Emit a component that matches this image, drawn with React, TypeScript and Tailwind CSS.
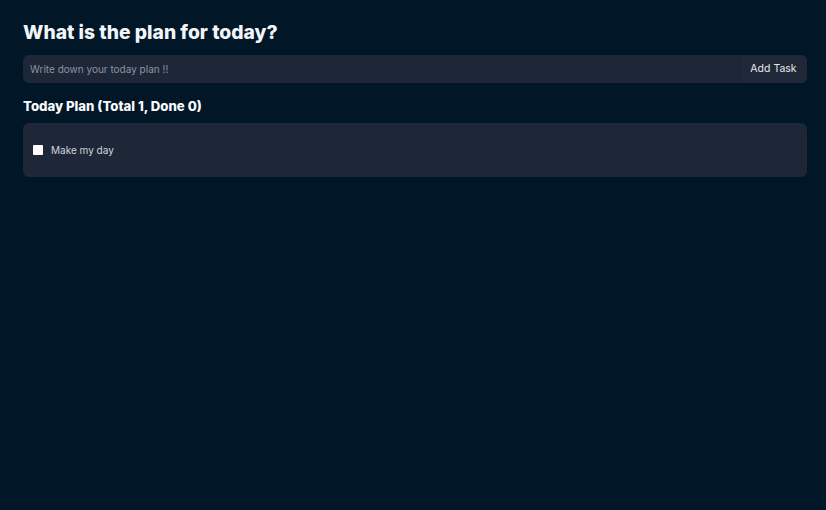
import { useState } from 'react';

export default function App() {
  const [tasks, setTasks] = useState([{ id: 1, title: 'Make my day', done: false }]);
  const doneCount = tasks.filter((t) => t.done).length;

  return (
    <div className="min-h-[510px] w-full bg-[#011627] font-['Inter',sans-serif] text-white">
      <div className="flex w-[807px] flex-col pl-[23px] pt-[18px]">
        <h1 className="text-[19.3px] leading-[28px] font-extrabold text-[#f1f5f9]">What is the plan for today?</h1>

        <div className="mt-[9px] flex h-[28px] overflow-hidden rounded-md bg-[#1e2738]">
          <input
            type="text"
            placeholder="Write down your today plan !!"
            className="flex-1 bg-transparent px-[7px] text-[10px] text-gray-300 placeholder-[#8b93a1] outline-none"
          />
          <button className="w-[68px] border-l border-[#1a2232] bg-[#1f2839] text-[10.5px] text-[#e5e7eb]">Add Task</button>
        </div>

        <h2 className="mt-[14px] text-[13.2px] leading-[18px] font-extrabold text-[#f8fafc]">
          Today Plan (Total {tasks.length}, Done {doneCount})
        </h2>

        <div className="mt-[8px] flex h-[54px] flex-col justify-center rounded-md bg-[#1e2738] px-[10px]">
          {tasks.map((task) => (
            <label key={task.id} className="flex items-center gap-[8px] text-[10px] text-[#d1d5db]">
              <input
                type="checkbox"
                checked={task.done}
                onChange={() => setTasks(tasks.map((t) => (t.id === task.id ? { ...t, done: !t.done } : t)))}
                className="m-0 h-[10px] w-[10px] appearance-none rounded-[1px] bg-white checked:bg-blue-500"
              />
              {task.title}
            </label>
          ))}
        </div>
      </div>
    </div>
  );
}
